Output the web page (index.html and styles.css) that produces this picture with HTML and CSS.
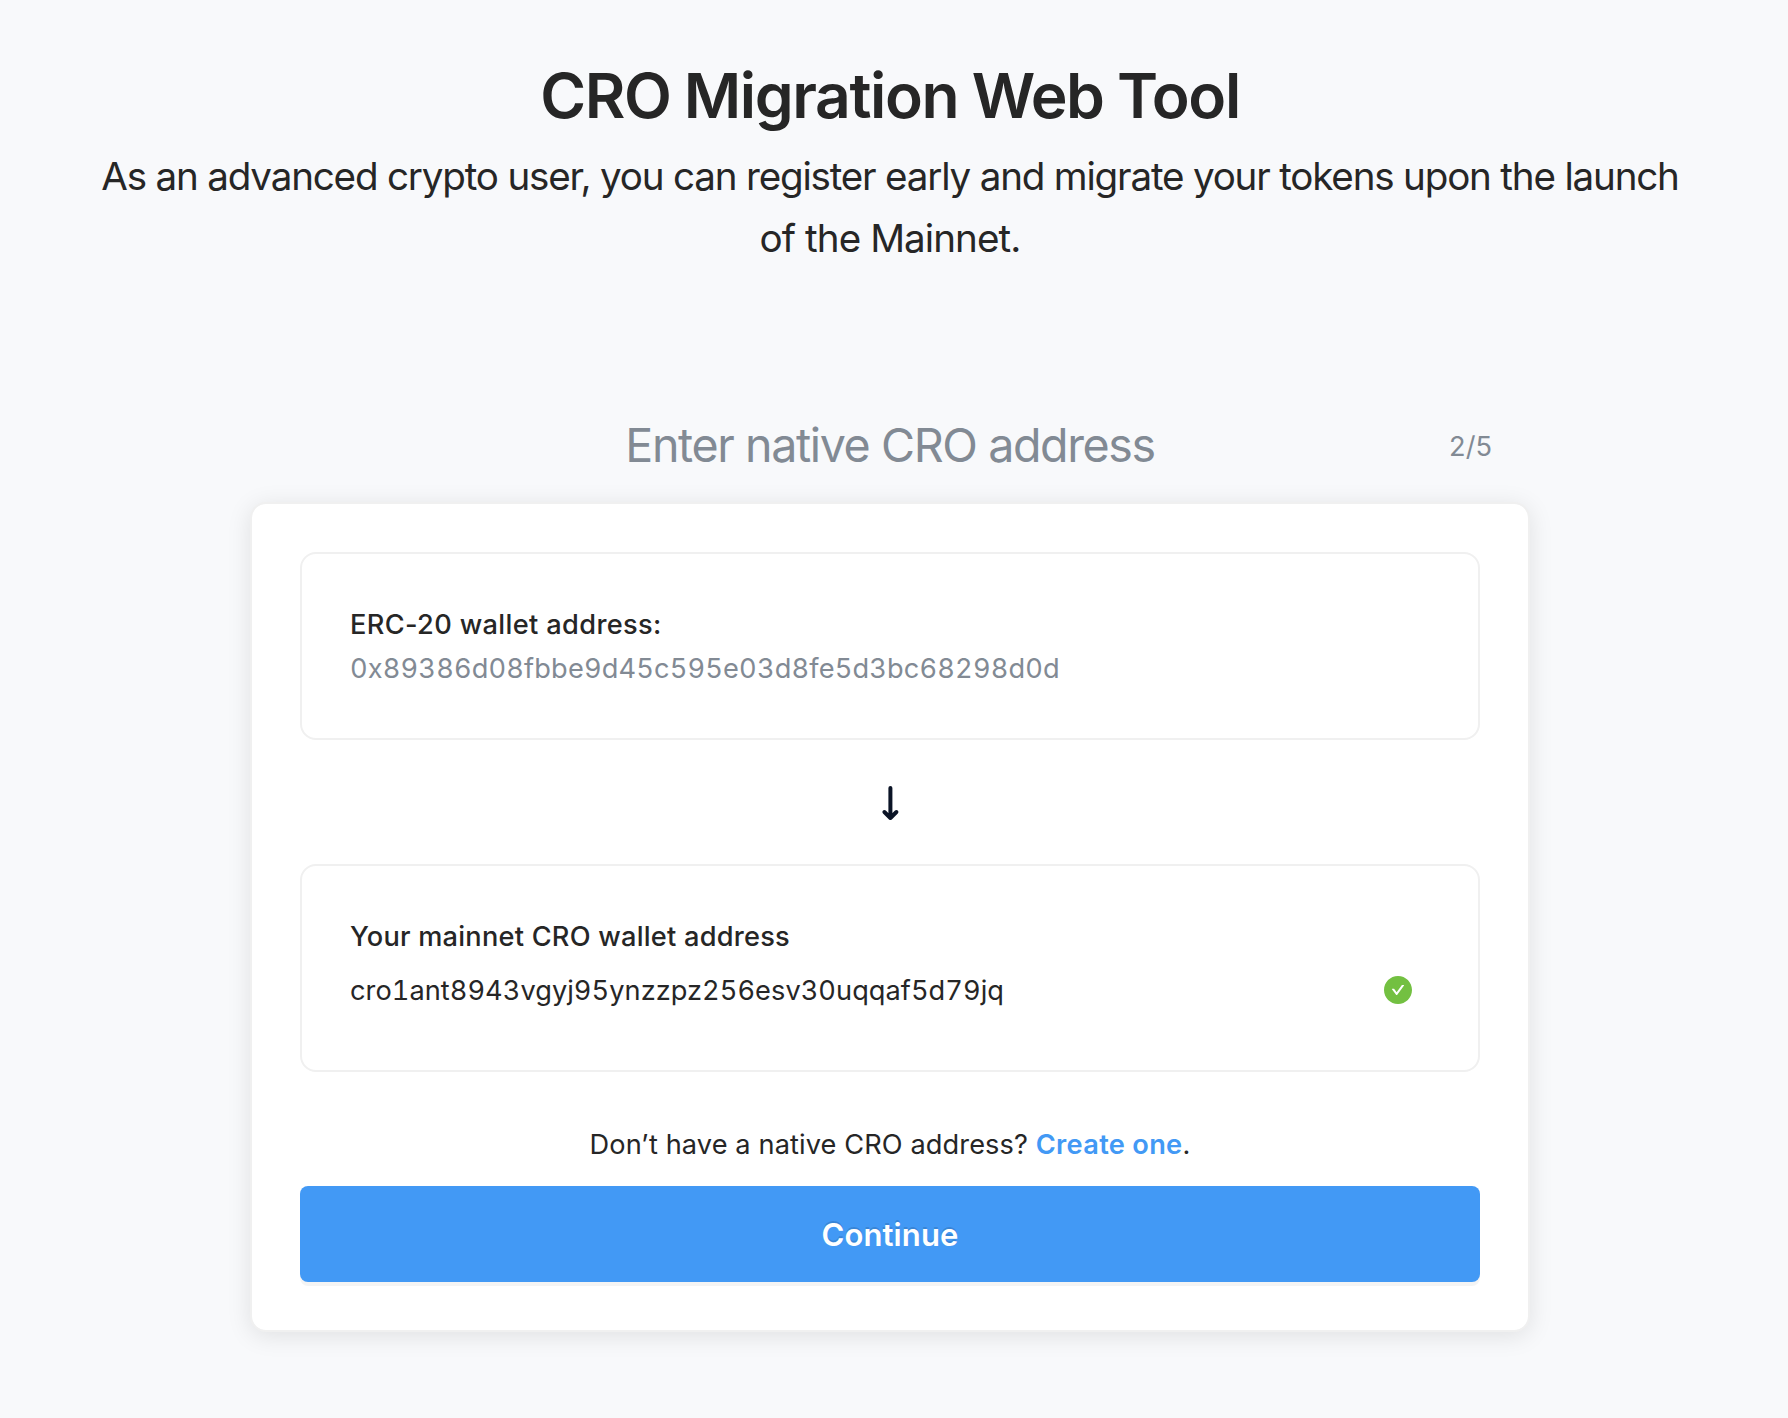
FILE: index.html
```html
<!DOCTYPE html>
<html lang="en">
<head>
<meta charset="utf-8">
<title>CRO Migration Web Tool</title>
<link rel="stylesheet" href="styles.css">
</head>
<body>
<main class="page">
  <header class="intro">
    <h1 class="title">CRO Migration Web Tool</h1>
    <p class="subtitle">As an advanced crypto user, you can register early and migrate your tokens upon the launch<br><span class="subtitle-end">of the Mainnet.</span></p>
  </header>
  <section class="step">
    <div class="step-head">
      <h2 class="step-title">Enter native CRO address</h2>
      <span class="step-count">2/5</span>
    </div>
    <div class="card">
      <div class="box">
        <div class="label label-source">ERC-20 wallet address:</div>
        <div class="address">0x89386d08fbbe9d45c595e03d8fe5d3bc68298d0d</div>
      </div>
      <div class="arrow">
        <svg width="24" height="40" viewBox="0 0 24 40" fill="none" stroke="#0b1426" stroke-width="4" stroke-linecap="round" stroke-linejoin="round"><path d="M12.4 6v30M6.4 30l6 6 6-6"/></svg>
      </div>
      <div class="box">
        <div class="label">Your mainnet CRO wallet address</div>
        <div class="field">
          <span class="value">cro1ant8943vgyj95ynzzpz256esv30uqqaf5d79jq</span>
          <svg class="check" viewBox="64 64 896 896"><path d="M512 64C264.6 64 64 264.6 64 512s200.6 448 448 448 448-200.6 448-448S759.4 64 512 64zm193.5 301.7l-210.6 292a31.8 31.8 0 01-51.7 0L318.5 484.9c-3.8-5.3 0-12.7 6.5-12.7h46.9c10.2 0 19.9 4.9 25.9 13.3l71.2 98.8 157.2-218c6-8.3 15.6-13.3 25.9-13.3H699c6.5 0 10.3 7.4 6.5 12.7z"/></svg>
        </div>
      </div>
      <p class="hint">Don’t have a native CRO address? <a class="link" href="#">Create one</a>.</p>
      <button class="continue" type="button">Continue</button>
    </div>
  </section>
</main>
</body>
</html>
```
FILE: styles.css
```css
body { margin: 0; background: #f8f9fb; color: #262626; font-family: Inter, "Liberation Sans", sans-serif; }
.page { width: 1780px; height: 1418px; box-sizing: border-box; padding-top: 57px; }
.intro { text-align: center; }
.title { margin: 0; font-size: 62.3px; line-height: 78px; font-weight: 600; letter-spacing: -1.38px; word-spacing: -1px; }
.subtitle { margin: 10px 0 0; font-size: 38.6px; line-height: 62px; letter-spacing: -1.188px; }
.subtitle-end { letter-spacing: -0.92px; }
.step { width: 1280px; margin: 141px auto 0; }
.step-head { display: grid; grid-template-columns: 1fr auto 1fr; align-items: center; height: 70px; margin-bottom: 22px; color: #828a94; }
.step-title { grid-column: 2; margin: 0; font-size: 46.6px; line-height: 70px; font-weight: 400; letter-spacing: -1.4px; }
.step-count { justify-self: end; margin-right: 38px; padding-top: 3px; font-size: 27.2px; line-height: 44px; }
.card { box-sizing: border-box; height: 830px; padding: 48px; border: 2px solid #f0f0f0; border-radius: 16px; background: #fff; background-clip: padding-box; box-shadow: 0 4px 24px rgba(0, 0, 0, 0.1); font-size: 27.2px; line-height: 44px; }
.box { padding: 49px 48px 47px; border: 2px solid #f0f0f0; border-radius: 16px; }
.label { font-weight: 500; letter-spacing: 0.23px; }
.label-source { letter-spacing: 0.35px; }
.address { color: #828a94; font-variant-numeric: tabular-nums; letter-spacing: 0.155px; }
.arrow { display: flex; justify-content: center; align-items: center; height: 124px; }
.field { display: flex; justify-content: space-between; align-items: center; height: 64px; margin: -1px 0 1px; padding-right: 18px; }
.value { padding-top: 2px; font-variant-numeric: tabular-nums; letter-spacing: 0.04px; }
.check { width: 28px; height: 28px; fill: #73c041; }
.hint { margin: 51px 0 19px; text-align: center; letter-spacing: 0.1px; }
.link { color: #4299f5; font-weight: 600; letter-spacing: 0.3px; text-decoration: none; }
.continue { display: block; width: 100%; height: 96px; padding: 1px 0 0; border: 0; border-radius: 8px; background: #4299f5; color: #fff; font: 600 31px/95px Inter, "Liberation Sans", sans-serif; letter-spacing: 0.1px; text-shadow: 0 -2px 0 rgba(0, 0, 0, 0.12); box-shadow: 0 4px 0 rgba(0, 0, 0, 0.045); }
```
